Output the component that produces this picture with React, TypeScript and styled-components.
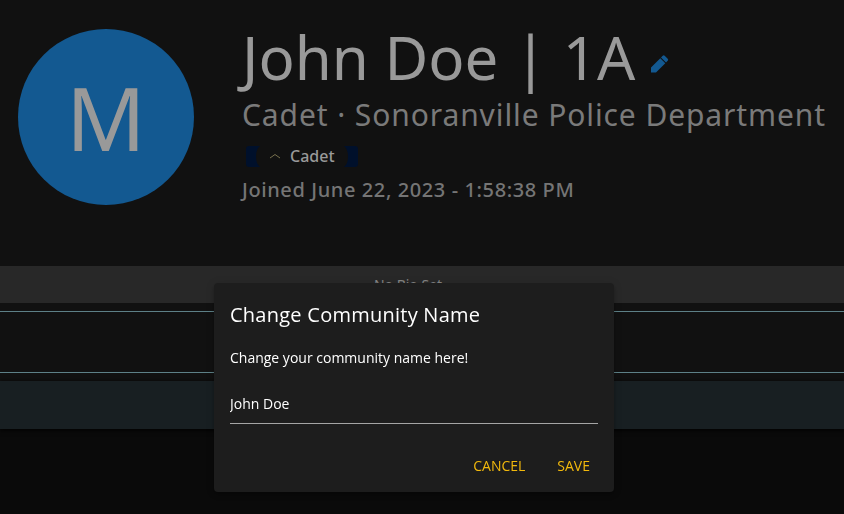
import React, { useState } from "react";
import styled, { createGlobalStyle } from "styled-components";

const GlobalStyle = createGlobalStyle`
  *, *::before, *::after { box-sizing: border-box; }
  html { height: 100%; background: #0a0a0a; }
  body {
    margin: 0;
    min-height: 100%;
    overflow: hidden;
    font-family: "Noto Sans", "Open Sans", sans-serif;
    color: #999999;
  }
  h1, h2, p { margin: 0; font-weight: 400; }
`;

const Profile = styled.main`
  background: #111111;
`;

const ProfileHeader = styled.header`
  display: flex;
  align-items: flex-start;
  gap: 48px;
  min-height: 266px;
  padding: 29px 18px 0;
`;

const Avatar = styled.div`
  display: flex;
  flex: none;
  align-items: center;
  justify-content: center;
  width: 176px;
  height: 176px;
  border-radius: 50%;
  background: #135991;
  font-size: 88px;
  line-height: 88px;
`;

const Identity = styled.div`
  display: flex;
  flex-direction: column;
  align-items: flex-start;
  white-space: nowrap;
`;

const NameRow = styled.div`
  display: flex;
  align-items: center;
  gap: 12px;
`;

const Name = styled.h1`
  font-size: 60px;
  line-height: 56px;
`;

const EditButton = styled.button`
  display: flex;
  padding: 0;
  margin-top: 14px;
  border: 0;
  background: none;
  color: #135991;
  cursor: pointer;
`;

const Department = styled.h2`
  font-size: 30px;
  line-height: 60px;
  letter-spacing: 0.03em;
  color: #7a7a7a;
`;

const RankTag = styled.div`
  display: flex;
  align-items: center;
  gap: 9px;
  height: 22px;
  padding-left: 4px;
  font-size: 16px;
  line-height: 22px;
  font-weight: 500;
`;

const Joined = styled.p`
  font-size: 20px;
  font-weight: 500;
  line-height: 46px;
  letter-spacing: 0.03em;
  color: #757575;
`;

const Bio = styled.section`
  height: 37px;
  padding-right: 28px;
  background: #282828;
  color: #858585;
  font-size: 14px;
  line-height: 37px;
  text-align: center;
`;

const Divided = styled.section`
  height: 62px;
  margin: 8px 0;
  border-top: 1px solid #5d8087;
  border-bottom: 1px solid #5d8087;
`;

const Strip = styled.section`
  height: 48px;
  background: #181f22;
  box-shadow: 0 1px 5px #000000;
`;

const Overlay = styled.div`
  position: fixed;
  inset: 0;
  display: flex;
  align-items: flex-end;
  justify-content: center;
  padding: 0 16px 22px 0;
`;

const Dialog = styled.form`
  width: 400px;
  max-width: 100%;
  border-radius: 4px;
  background: #1d1d1d;
  color: #ffffff;
  font-family: "Open Sans", "Noto Sans", sans-serif;
  font-size: 14px;
  line-height: 21px;
  box-shadow: 0 2px 4px -1px rgba(0, 0, 0, 0.2), 0 4px 5px rgba(0, 0, 0, 0.14),
    0 1px 10px rgba(0, 0, 0, 0.12);
`;

const DialogTitle = styled.h2`
  padding: 16px 16px 0;
  font-size: 20px;
  font-weight: 500;
  line-height: 32px;
  letter-spacing: 0.0125em;
`;

const Field = styled.label`
  display: block;
  padding: 16px 16px 0;
`;

const NameInput = styled.input`
  display: block;
  width: 100%;
  height: 40px;
  margin-top: 16px;
  padding: 0;
  border: 0;
  border-bottom: 1px solid #a5a5a5;
  border-radius: 0;
  outline: 0;
  background: none;
  color: inherit;
  font: inherit;
`;

const Actions = styled.div`
  display: flex;
  justify-content: flex-end;
  padding: 24px 8px 8px;
`;

const ActionButton = styled.button`
  height: 36px;
  padding: 0 16px 2px;
  border: 0;
  border-radius: 3px;
  background: none;
  color: #f2b90c;
  font: inherit;
  font-weight: 500;
  text-transform: uppercase;
  cursor: pointer;
`;

function PencilIcon() {
  return (
    <svg width="24" height="24" viewBox="0 0 24 24" fill="currentColor" aria-hidden="true">
      <path d="M4 15.5V20.5H9L18.300 11.200 13.300 6.200zM19 10.500 20.700 8.800Q21.700 7.800 20.700 6.800L17.700 3.800Q16.700 2.800 15.700 3.800L14 5.500z" />
    </svg>
  );
}

function TagCap({ flipped = false }: { flipped?: boolean }) {
  return (
    <svg width="14" height="21" viewBox="0 0 14 21" aria-hidden="true">
      <path
        fill="#00102b"
        transform={flipped ? "translate(14 0) scale(-1 1)" : undefined}
        d="M3 0H14Q10 3 10 10.500Q10 18 14 21H3Q0 21 0 18V3Q0 0 3 0Z"
      />
    </svg>
  );
}

function ChevronMark() {
  return (
    <svg width="12" height="6" viewBox="0 0 12 6" fill="none" aria-hidden="true">
      <path d="M1 5 6 1.500l5 3.500" stroke="#77704d" />
    </svg>
  );
}

export default function App() {
  const [name, setName] = useState("John Doe");

  return (
    <>
      <GlobalStyle />
      <Profile>
        <ProfileHeader>
          <Avatar>M</Avatar>
          <Identity>
            <NameRow>
              <Name>John Doe | 1A</Name>
              <EditButton type="button" aria-label="Edit name">
                <PencilIcon />
              </EditButton>
            </NameRow>
            <Department>Cadet · Sonoranville Police Department</Department>
            <RankTag>
              <TagCap />
              <ChevronMark />
              <span>Cadet</span>
              <TagCap flipped />
            </RankTag>
            <Joined>Joined June 22, 2023 - 1:58:38 PM</Joined>
          </Identity>
        </ProfileHeader>
        <Bio>No Bio Set</Bio>
        <Divided />
        <Strip />
      </Profile>
      <Overlay>
        <Dialog
          role="dialog"
          aria-labelledby="dialog-title"
          onSubmit={(event) => event.preventDefault()}
        >
          <DialogTitle id="dialog-title">Change Community Name</DialogTitle>
          <Field>
            Change your community name here!
            <NameInput value={name} onChange={(event) => setName(event.target.value)} />
          </Field>
          <Actions>
            <ActionButton type="button">Cancel</ActionButton>
            <ActionButton type="submit">Save</ActionButton>
          </Actions>
        </Dialog>
      </Overlay>
    </>
  );
}
